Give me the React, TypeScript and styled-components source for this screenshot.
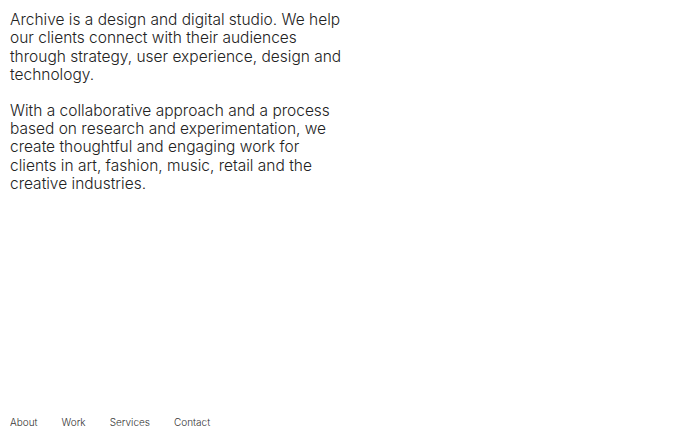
import React from "react";
import styled, { createGlobalStyle } from "styled-components";

const GlobalStyle = createGlobalStyle`
  html, body {
    margin: 0;
    padding: 0;
    background: #ffffff;
  }
  body {
    font-family: Inter, "Liberation Sans", Arial, sans-serif;
    color: #222222;
    -webkit-font-smoothing: antialiased;
  }
`;

const paragraphs = [
  "Archive is a design and digital studio. We help our clients connect with their audiences through strategy, user experience, design and technology.",
  "With a collaborative approach and a process based on research and experimentation, we create thoughtful and engaging work for clients in art, fashion, music, retail and the creative industries.",
];

const links = ["About", "Work", "Services", "Contact"];

const App: React.FC = () => {
  return (
    <Page>
      <GlobalStyle />
      <Intro>
        {paragraphs.map((p) => (
          <Paragraph key={p}>{p}</Paragraph>
        ))}
      </Intro>
      <Nav>
        {links.map((l) => (
          <NavLink key={l} href="#">
            {l}
          </NavLink>
        ))}
      </Nav>
    </Page>
  );
};

export default App;

const Page = styled.div`
  min-height: 100vh;
  box-sizing: border-box;
  display: flex;
  flex-direction: column;
  justify-content: space-between;
  padding: 11px 10px 10px;
`;

const Intro = styled.main`
  width: 335px;
  display: flex;
  flex-direction: column;
  gap: 17px;
`;

const Paragraph = styled.p`
  margin: 0;
  font-size: 15.5px;
  font-weight: 300;
  line-height: 18.4px;
  color: #222222;
`;

const Nav = styled.nav`
  display: flex;
  gap: 24px;
`;

const NavLink = styled.a`
  font-size: 10px;
  font-weight: 300;
  line-height: 12px;
  color: #333333;
  text-decoration: none;
`;
